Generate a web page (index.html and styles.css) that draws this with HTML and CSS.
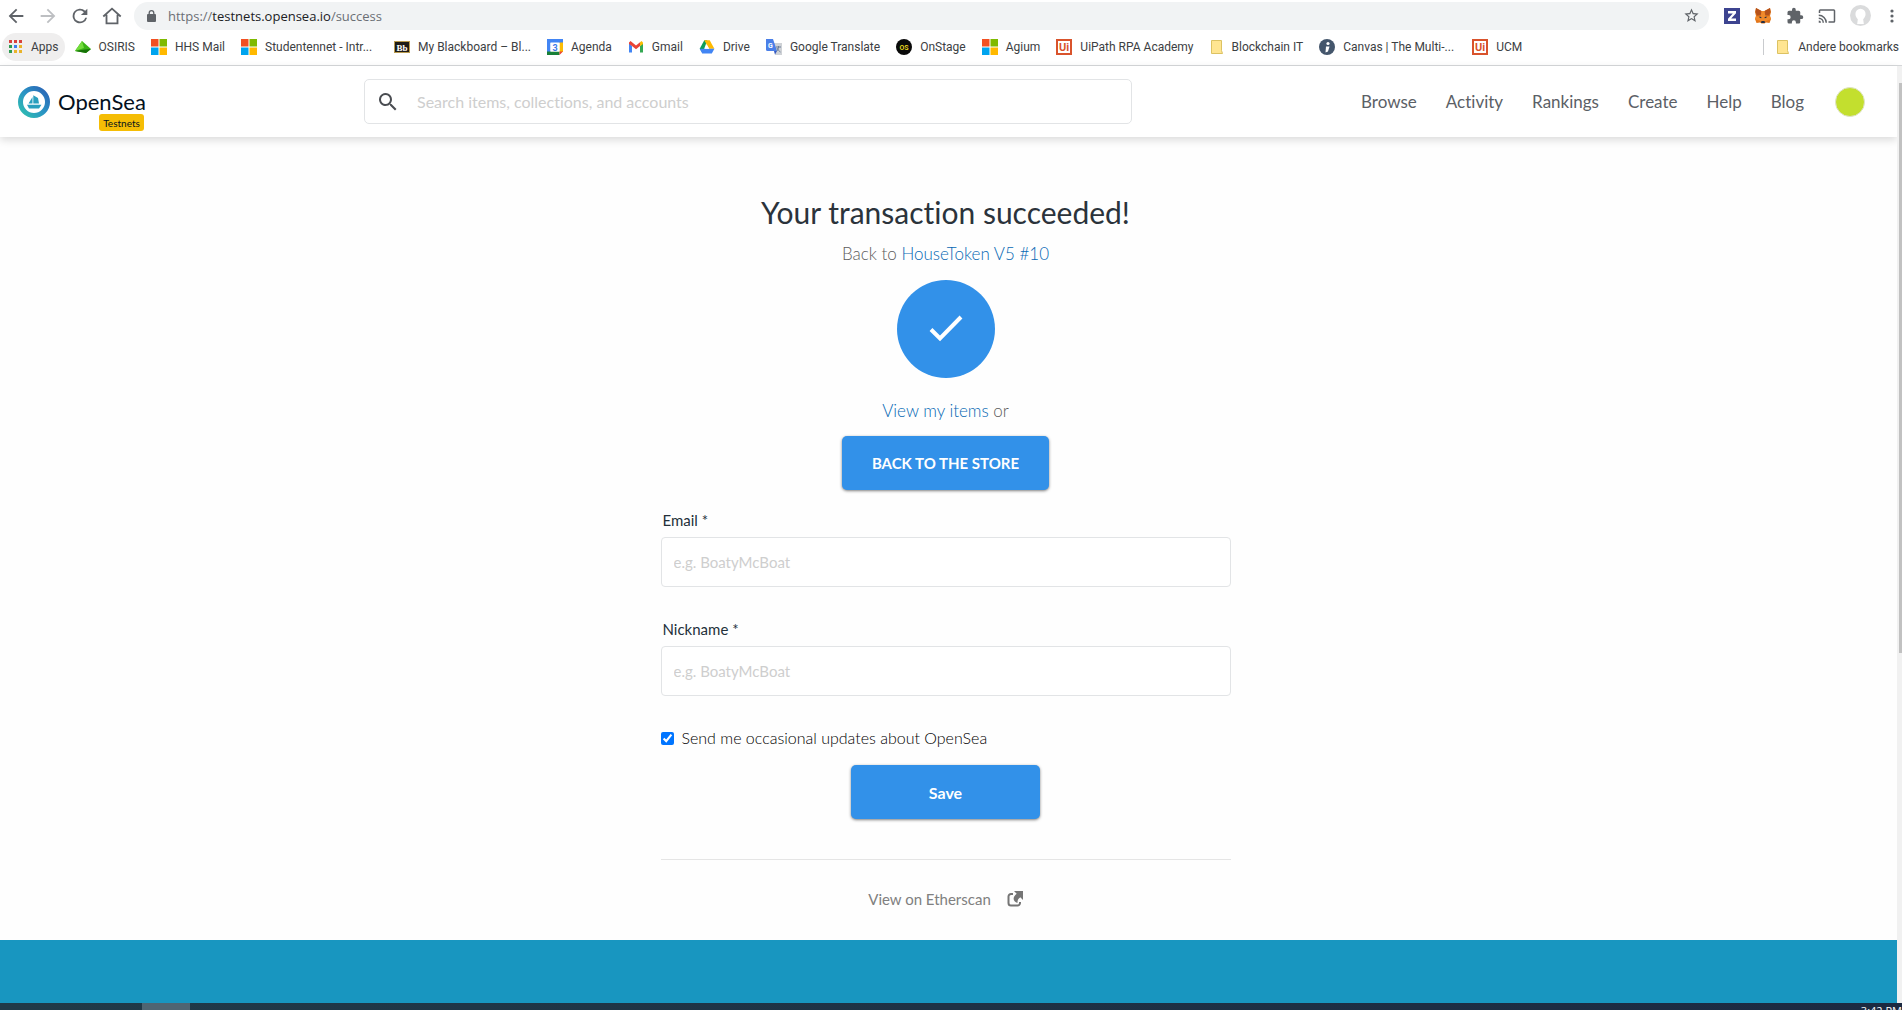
FILE: index.html
```html
<!DOCTYPE html>
<html lang="en">
<head>
<meta charset="utf-8">
<title>OpenSea</title>
<link rel="stylesheet" href="styles.css">
</head>
<body>
<div class="browser">
  <div class="toolbar">
    <div class="nav-buttons">
      <button class="icon-btn" aria-label="Back"><svg viewBox="0 0 24 24" width="22" height="22"><path fill="#5f6368" d="M20 11H7.830l5.590-5.590L12 4l-8 8 8 8 1.410-1.410L7.830 13H20z"/></svg></button>
      <button class="icon-btn" aria-label="Forward"><svg viewBox="0 0 24 24" width="22" height="22"><path fill="#bdbfc2" d="M12 4l-1.410 1.410L16.170 11H4v2h12.170l-5.580 5.590L12 20l8-8z"/></svg></button>
      <button class="icon-btn" aria-label="Reload"><svg viewBox="0 0 24 24" width="22" height="22"><path fill="#5f6368" d="M17.650 6.350A8 8 0 1 0 19.730 14h-2.080A6 6 0 1 1 12 6c1.660 0 3.140.690 4.220 1.780L13 11h7V4z"/></svg></button>
      <button class="icon-btn" aria-label="Home"><svg viewBox="0 0 24 24" width="22" height="22"><path fill="none" stroke="#5f6368" stroke-width="2" d="M2.500 12.500L12 4l9.500 8.500M6 10.500V20h12v-9.500"/></svg></button>
    </div>
    <div class="omnibox">
      <svg viewBox="0 0 9 12" width="9" height="12"><rect y="4" width="9" height="8" rx="1" fill="#5f6368"/><path d="M2.200 5V3a2.300 2.300 0 0 1 4.600 0v2" fill="none" stroke="#5f6368" stroke-width="1.300"/></svg>
      <span class="url">https://<b>testnets.opensea.io</b>/success</span>
      <button class="icon-btn" aria-label="Bookmark"><svg viewBox="0 0 24 24" width="17" height="17"><path fill="#5f6368" d="M22 9.240l-7.190-.620L12 2 9.190 8.630 2 9.240l5.460 4.730L5.820 21 12 17.270 18.180 21l-1.630-7.030zM12 15.400l-3.760 2.270 1-4.280-3.320-2.880 4.380-.380L12 6.100l1.710 4.040 4.380.380-3.320 2.880 1 4.280z"/></svg></button>
    </div>
    <div class="extensions">
      <button class="icon-btn" aria-label="Z"><svg viewBox="0 0 16 16" width="16" height="16"><rect width="16" height="16" fill="#3d4490"/><path d="M4 3h8v2.300L7.200 10.600H12V13H4v-2.300l4.800-5.300H4z" fill="#fff"/></svg></button>
      <button class="icon-btn" aria-label="MetaMask"><svg viewBox="0 0 16 16" width="18" height="16"><path fill="#e2761b" d="M1 0l5.500 3h3L15 0l1 4-1 4 1 3-1.500 4-3.500-.500-1.500 1h-3l-1.500-1L1.500 15 0 11l1-3-1-4z"/><path fill="#b5521b" d="M1 0l5.500 3 .5 4-5 .500L.500 4zM15 0L9.500 3 9 7l5 .500L15.500 4z"/><path fill="#f08a2c" d="M6.500 3h3l1 6 4.500-1 1 3-5 2H5l-5-2 1-3 4.500 1z"/><path fill="#263043" d="M4.500 8.500l2 .8-.3 1-1.700-.500zM11.500 8.500l-2 .8.3 1 1.700-.500zM6.500 13h3l.5 2H6z"/></svg></button>
      <button class="icon-btn" aria-label="Extensions"><svg viewBox="0 0 24 24" width="18" height="18"><path fill="#5f6368" d="M20.500 11H19V7a2 2 0 0 0-2-2h-4V3.500a2.500 2.500 0 0 0-5 0V5H4a2 2 0 0 0-2 2v3.800h1.500a2.700 2.700 0 0 1 0 5.400H2V20a2 2 0 0 0 2 2h3.800v-1.500a2.700 2.700 0 0 1 5.400 0V22H17a2 2 0 0 0 2-2v-4h1.500a2.500 2.500 0 0 0 0-5z"/></svg></button>
      <button class="icon-btn" aria-label="Cast"><svg viewBox="0 0 24 24" width="18" height="18"><path fill="#5f6368" d="M21 3H3a2 2 0 0 0-2 2v3h2V5h18v14h-7v2h7a2 2 0 0 0 2-2V5a2 2 0 0 0-2-2zM1 18v3h3a3 3 0 0 0-3-3zm0-4v2a5 5 0 0 1 5 5h2a7 7 0 0 0-7-7zm0-4v2a9 9 0 0 1 9 9h2A11 11 0 0 0 1 10z"/></svg></button>
      <button class="icon-btn" aria-label="Profile"><svg viewBox="0 0 22 22" width="21" height="21"><circle cx="11" cy="11" r="11" fill="#dadbdc"/><path fill="#fff" d="M11 4a5.300 5.300 0 0 1 5.300 5.500c0 2.500-1.300 4.200-2.500 5.300L14.500 20h-7l.7-5.200C7 13.700 5.700 12 5.700 9.500A5.300 5.300 0 0 1 11 4z"/></svg></button>
      <button class="icon-btn menu" aria-label="Menu"><svg viewBox="0 0 4 16" width="4" height="16"><g fill="#5f6368"><circle cx="2" cy="3" r="1.600"/><circle cx="2" cy="8" r="1.600"/><circle cx="2" cy="13" r="1.600"/></g></svg></button>
    </div>
  </div>
  <nav class="bookmarks" aria-label="Bookmarks">
    <a class="bookmark apps" href="#"><svg viewBox="0 0 15 15" width="15" height="15"><g fill="#d9413c"><path d="M1 1h3v3H1zM6 1h3v3H6zM11 1h3v3h-3z"/></g><path fill="#2d9c50" d="M1 6h3v3H1zM1 11h3v3H1z"/><path fill="#3b7ded" d="M6 6h3v3H6z"/><path fill="#e9b32a" d="M11 6h3v3h-3zM6 11h3v3H6zM11 11h3v3h-3z"/></svg><span>Apps</span></a>
    <a class="bookmark" href="#"><svg viewBox="0 0 16 16" width="16" height="16"><path fill="#39b315" d="M7 2l9 8-5 4-11-2z"/><path fill="#73dc3c" d="M7 2l2 7-9 3z"/><path fill="#167207" d="M0 12l10-1.500 6-.500-5 4z"/></svg><span>OSIRIS</span></a>
    <a class="bookmark" href="#"><svg viewBox="0 0 16 16" width="16" height="16"><path fill="#f25022" d="M0 0h7.500v7.500H0z"/><path fill="#7fba00" d="M8.500 0H16v7.500H8.500z"/><path fill="#00a4ef" d="M0 8.500h7.500V16H0z"/><path fill="#ffb900" d="M8.500 8.500H16V16H8.500z"/></svg><span>HHS Mail</span></a>
    <a class="bookmark" href="#"><svg viewBox="0 0 16 16" width="16" height="16"><path fill="#f25022" d="M0 0h7.500v7.500H0z"/><path fill="#7fba00" d="M8.500 0H16v7.500H8.500z"/><path fill="#00a4ef" d="M0 8.500h7.500V16H0z"/><path fill="#ffb900" d="M8.500 8.500H16V16H8.500z"/></svg><span class="long">Studentennet - Intr...</span></a>
    <a class="bookmark" href="#"><svg viewBox="0 0 16 16" width="16" height="16"><rect x=".500" y="2.500" width="15" height="11" fill="#1d1a16" stroke="#b89a4e"/><text x="8" y="11.500" text-anchor="middle" font-family="Liberation Serif" font-weight="700" font-size="9" fill="#fff">Bb</text></svg><span class="long">My Blackboard – Bl...</span></a>
    <a class="bookmark" href="#"><svg viewBox="0 0 16 16" width="16" height="16"><path fill="#4285f4" d="M0 0h16v4H3.500v9H0z"/><path fill="#fbbc04" d="M12.500 3.500H16V13h-3.500z"/><path fill="#188038" d="M0 12.500h12.500V16H0z"/><path fill="#ea4335" d="M12.500 12.500H16L12.500 16z"/><path fill="#fff" d="M3.500 3.500h9v9h-9z"/><text x="8" y="11.500" text-anchor="middle" font-family="Roboto" font-weight="700" font-size="9" fill="#3b78e7">3</text></svg><span>Agenda</span></a>
    <a class="bookmark" href="#"><svg viewBox="0 0 16 16" width="16" height="16"><path fill="#4285f4" d="M1 4v9.500h3V7z"/><path fill="#34a853" d="M15 4v9.500h-3V7z"/><path fill="#ea4335" d="M1 3.500L2.500 2 8 6.500 12 3.300V7L8 10.300 4 7 1 5z"/><path fill="#fbbc04" d="M12 3.300L13.500 2 15 3.500V5l-3 2.200z"/></svg><span>Gmail</span></a>
    <a class="bookmark" href="#"><svg viewBox="0 0 16 16" width="16" height="16"><path fill="#0f9d58" d="M5.300 1.300h3L3.600 14 .700 9.800z"/><path fill="#ffba00" d="M5.300 1.300h5.400l4.700 8.500H10z"/><path fill="#4285f4" d="M3.200 9.800h12.200L12.800 14.500H3.200L.700 9.800z"/><path fill="#fff" d="M8 6l2.200 3.800H5.800z"/></svg><span>Drive</span></a>
    <a class="bookmark" href="#"><svg viewBox="0 0 16 16" width="16" height="16"><path fill="#cfd2d6" d="M7 4h9v12H9z"/><path fill="#4a7fe8" d="M0 0h7l4 12H1.500A1.500 1.500 0 0 1 0 10.500z"/><path fill="#3459c4" d="M8 12h3l-2 3.500z"/><path stroke="#6b7d99" fill="none" d="M10 8h5M12.500 7v1c0 2-1 3.500-2 4.500M11 9c.5 1.500 2 3 3.500 4"/><text x="4.500" y="8.500" text-anchor="middle" font-family="Roboto" font-weight="700" font-size="7" fill="#fff">G</text></svg><span>Google Translate</span></a>
    <a class="bookmark" href="#"><svg viewBox="0 0 16 16" width="16" height="16"><circle cx="8" cy="8" r="8" fill="#0a0a0a"/><text x="8" y="10.500" text-anchor="middle" font-family="Roboto" font-weight="700" font-size="7" fill="#e3d21c">OS</text></svg><span>OnStage</span></a>
    <a class="bookmark" href="#"><svg viewBox="0 0 16 16" width="16" height="16"><path fill="#f25022" d="M0 0h7.500v7.500H0z"/><path fill="#7fba00" d="M8.500 0H16v7.500H8.500z"/><path fill="#00a4ef" d="M0 8.500h7.500V16H0z"/><path fill="#ffb900" d="M8.500 8.500H16V16H8.500z"/></svg><span>Agium</span></a>
    <a class="bookmark" href="#"><svg viewBox="0 0 16 16" width="16" height="16"><rect x="1" y="1" width="14" height="14" fill="#fff" stroke="#d9532c" stroke-width="2"/><text x="8" y="12" text-anchor="middle" font-family="Roboto" font-weight="700" font-size="11" fill="#d9532c">Ui</text></svg><span>UiPath RPA Academy</span></a>
    <a class="bookmark" href="#"><svg viewBox="0 0 14 16" width="14" height="16"><path fill="#ffe591" stroke="#dcc262" d="M1.500 1.500h10v10l1 3h-11z"/></svg><span>Blockchain IT</span></a>
    <a class="bookmark" href="#"><svg viewBox="0 0 16 16" width="16" height="16"><circle cx="8" cy="8" r="8" fill="#44566c"/><circle cx="9" cy="4.500" r="1.600" fill="#fff"/><path fill="#fff" d="M7 7.500h3.500l-1.500 5-2.500 1z"/></svg><span class="long">Canvas | The Multi-...</span></a>
    <a class="bookmark" href="#"><svg viewBox="0 0 16 16" width="16" height="16"><rect x="1" y="1" width="14" height="14" fill="#fff" stroke="#d9532c" stroke-width="2"/><text x="8" y="12" text-anchor="middle" font-family="Roboto" font-weight="700" font-size="11" fill="#d9532c">Ui</text></svg><span>UCM</span></a>
    <a class="bookmark other" href="#"><svg viewBox="0 0 14 16" width="14" height="16"><path fill="#ffe591" stroke="#dcc262" d="M1.500 1.500h10v10l1 3h-11z"/></svg><span>Andere bookmarks</span></a>
  </nav>
</div>
<div class="viewport">
  <div class="page">
    <header class="site-header">
      <a class="brand" href="#">
        <svg viewBox="0 0 32 32" width="32" height="32"><defs><linearGradient id="ring" x1="0" y1="1" x2="1" y2="0"><stop offset="0" stop-color="#2fc0b0"/><stop offset=".5" stop-color="#2a93c4"/><stop offset="1" stop-color="#2a62b5"/></linearGradient></defs><circle cx="16" cy="16" r="13.500" fill="#fff" stroke="url(#ring)" stroke-width="5"/><path fill="#2a9fbe" d="M10.500 17.500L14.500 11v6.500zM15.300 17.500V9.300L20 12l1 5.500zM9 18.800h14.500L21 22.500H11z"/></svg>
        <span class="brand-name">OpenSea</span>
        <span class="badge">Testnets</span>
      </a>
      <label class="search">
        <svg viewBox="0 0 24 24" width="24" height="24"><path fill="#4a4d52" d="M15.500 14h-.790l-.280-.270A6.500 6.500 0 1 0 13.730 14.430l.270.280v.790l5 4.990L20.490 19zm-6 0a4.500 4.500 0 1 1 0-9 4.500 4.500 0 0 1 0 9z"/></svg>
        <input type="search" placeholder="Search items, collections, and accounts" aria-label="Search">
      </label>
      <nav class="links">
        <a href="#">Browse</a><a href="#">Activity</a><a href="#">Rankings</a><a href="#">Create</a><a href="#">Help</a><a href="#">Blog</a>
        <a class="avatar" href="#" aria-label="Account"></a>
      </nav>
    </header>
    <main class="result">
      <h1>Your transaction succeeded!</h1>
      <p class="note">Back to <a href="#">HouseToken V5 #10</a></p>
      <svg class="success" viewBox="0 0 100 100" width="100" height="100"><circle cx="50" cy="50" r="49" fill="#3291e9"/><path d="M35 50.500l9 9L65 38" fill="none" stroke="#fff" stroke-width="4"/></svg>
      <p class="note"><a href="#">View my items</a> or</p>
      <button class="btn store">BACK TO THE STORE</button>
      <form class="form">
        <label class="field-label" for="email">Email *</label>
        <input class="field" id="email" type="text" placeholder="e.g. BoatyMcBoat">
        <label class="field-label" for="nick">Nickname *</label>
        <input class="field" id="nick" type="text" placeholder="e.g. BoatyMcBoat">
        <label class="updates"><input type="checkbox" checked><span>Send me occasional updates about OpenSea</span></label>
        <button class="btn save" type="button">Save</button>
      </form>
      <a class="etherscan" href="#">View on Etherscan
        <svg viewBox="0 0 16 16" width="16" height="16"><path d="M6 3H4A2.500 2.500 0 0 0 1.500 5.500V12A2.500 2.500 0 0 0 4 14.500h6.500A2.500 2.500 0 0 0 13 12v-1" fill="none" stroke="#757575" stroke-width="2"/><path fill="#757575" d="M7 0h9v9l-2.700-2.700C11 8 10.500 9 10.500 12 6 10.500 5 6.500 9.700 2.700z"/></svg>
      </a>
    </main>
    <footer class="site-footer"></footer>
  </div>
  <div class="scrollbar"><div class="thumb"></div></div>
</div>
<div class="taskbar"><div class="task"></div><span class="clock">3:42 PM</span></div>
</body>
</html>
```
FILE: styles.css
```css
* { box-sizing: border-box; }
body {
  margin: 0;
  height: 100vh;
  overflow: hidden;
  display: flex;
  flex-direction: column;
  background: #fff;
  font-family: Lato, "Liberation Sans", sans-serif;
  font-size: 16px;
  font-variant-ligatures: none;
}
svg { display: block; flex: none; }
a { text-decoration: none; color: inherit; }
button { font: inherit; cursor: pointer; }

.browser {
  flex: none;
  height: 66px;
  border-bottom: 1px solid #d6d8da;
  font-family: "Open Sans", "Noto Sans", sans-serif;
  color: #3c4043;
}
.toolbar { display: flex; align-items: center; height: 31px; }
.icon-btn { border: 0; padding: 0; background: none; }
.nav-buttons { display: flex; gap: 10px; padding: 0 11px 0 5px; }
.omnibox {
  flex: 1;
  display: flex;
  align-items: center;
  gap: 12px;
  height: 28px;
  padding: 0 9px 0 13px;
  border-radius: 14px;
  background: #f1f3f4;
}
.url { flex: 1; font-size: 13px; color: #6b6f74; }
.url b { font-weight: 400; color: #202124; }
.extensions { display: flex; align-items: center; gap: 14px; padding: 0 8px 0 15px; }
.menu { margin-left: 5px; }

.bookmarks {
  display: flex;
  align-items: center;
  gap: 16px;
  height: 31px;
  padding: 0 3px 0 2px;
  font-family: Roboto, "Open Sans", sans-serif;
  font-size: 12px;
  white-space: nowrap;
}
.bookmark { display: flex; align-items: center; gap: 8px; height: 28px; }
.apps { padding: 0 6px; margin-right: -6px; border-radius: 14px; background: #efeeee; }
.long { min-width: 113px; }
.other { margin-left: auto; padding-left: 12px; height: 16px; border-left: 1px solid #c9cbce; }

.viewport { flex: 1; min-height: 0; display: flex; }
.page { flex: 1; display: flex; flex-direction: column; background: #fefefe; }
.scrollbar { flex: none; width: 5px; padding: 17px 0 0 2px; background: #f1f1f1; }
.thumb { height: 62%; background: #c1c1c1; }

.site-header {
  display: flex;
  align-items: center;
  height: 71px;
  padding: 0 32px 0 18px;
  background: #fff;
  box-shadow: 0 3px 8px rgba(0, 0, 0, 0.14);
}
.brand { position: relative; display: flex; align-items: center; gap: 8px; width: 346px; color: #04111d; }
.brand-name { font-size: 22px; }
.badge {
  position: absolute;
  left: 81px;
  top: 28px;
  width: 45px;
  height: 17px;
  border-radius: 3px;
  background: #f5bd05;
  font-size: 10px;
  line-height: 18px;
  text-align: center;
}
.search {
  flex: none;
  display: flex;
  align-items: center;
  gap: 17px;
  width: 768px;
  height: 45px;
  padding: 0 11px;
  border: 1px solid #e2e4e6;
  border-radius: 5px;
}
.search input { flex: 1; border: 0; padding: 0; outline: 0; font: inherit; }
::placeholder { color: #cecece; opacity: 1; }
.links { display: flex; align-items: center; gap: 29px; margin-left: auto; font-size: 17px; color: #5b6066; }
.avatar { width: 30px; height: 30px; margin-left: 2px; border: 1px solid #dfe3c8; border-radius: 50%; background: #c3df2e; }

.result {
  flex: 1;
  display: flex;
  flex-direction: column;
  align-items: center;
  padding: 56px 6px 0 0;
}
h1 { margin: 0; font-size: 30px; line-height: 38px; font-weight: 400; color: #2b333b; }
.note { margin: 0; font-size: 17px; line-height: 24px; font-weight: 300; color: #5c5c5c; }
h1 + .note { margin-top: 11px; }
.note a { color: #0668b4; }
.success { margin: 13px 0 20px; }
.btn {
  height: 54px;
  border: 0;
  border-radius: 5px;
  background: #3291e9;
  color: #fff;
  font-weight: 700;
  box-shadow: 0 1px 3px rgba(0, 0, 0, 0.5);
}
.store { margin-top: 13px; padding: 0 30px; font-size: 15px; }
.form {
  display: flex;
  flex-direction: column;
  width: 570px;
  padding: 20px 0 40px;
  border-bottom: 1px solid #e5e5e5;
}
.field-label { padding-left: 2px; font-size: 15px; line-height: 20px; color: #23303a; }
.field {
  height: 50px;
  margin: 7px 0 32px;
  padding: 0 12px;
  border: 1px solid #e2e4e6;
  border-radius: 4px;
  font: inherit;
  font-size: 15px;
}
.updates { display: flex; align-items: center; gap: 8px; line-height: 20px; font-weight: 300; color: #000; }
.updates input { width: 13px; height: 13px; margin: 0; accent-color: #0075ff; }
.save { align-self: center; width: 189px; margin-top: 17px; }
.etherscan { display: flex; align-items: center; gap: 16px; margin-top: 28px; line-height: 22px; font-size: 15px; color: #808080; }
.site-footer { flex: none; height: 63px; background: #1896c0; }

.taskbar {
  flex: none;
  display: flex;
  height: 7px;
  overflow: hidden;
  background: linear-gradient(90deg, #203a48, #1c2a42);
}
.task { width: 48px; margin-left: 142px; background: #4f6572; }
.clock { margin-left: auto; color: #fff; font: 11px/16px "Open Sans", sans-serif; }
```
